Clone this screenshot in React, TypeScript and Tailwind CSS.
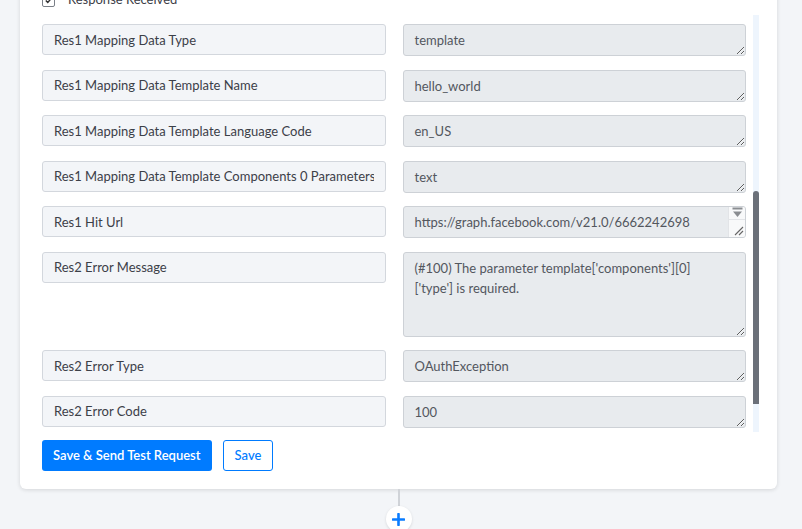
import React from "react";

type Row = { label: string; value: string; tall?: boolean; scroll?: boolean };

const rows: Row[] = [
  { label: "Res1 Mapping Data Type", value: "template" },
  { label: "Res1 Mapping Data Template Name", value: "hello_world" },
  { label: "Res1 Mapping Data Template Language Code", value: "en_US" },
  { label: "Res1 Mapping Data Template Components 0 Parameters 0 Type", value: "text" },
  {
    label: "Res1 Hit Url",
    value: "https://graph.facebook.com/v21.0/6662242698\n70041957/messages",
    scroll: true,
  },
  {
    label: "Res2 Error Message",
    value: "(#100) The parameter template['components'][0]\n['type'] is required.",
    tall: true,
  },
  { label: "Res2 Error Type", value: "OAuthException" },
  { label: "Res2 Error Code", value: "100" },
];

const font = { fontFamily: "Lato, 'Open Sans', sans-serif" };

function ValueBox({ r }: { r: Row }) {
  const ta = (
    <textarea
      readOnly
      value={r.value}
      className={`block w-full rounded-[3px] border border-[#cdd1d6] bg-[#e8ebee] pl-[11px] py-[5px] text-[13px] leading-[20px] text-[#53575e] outline-none overflow-hidden ${
        r.tall ? "h-[85px]" : "h-[32px]"
      } ${r.scroll ? "pr-[20px]" : "pr-[11px]"}`}
      style={font}
    />
  );
  if (!r.scroll) return ta;
  return (
    <div className="relative">
      {ta}
      <div className="absolute right-[1px] top-[1px] bottom-[1px] w-[17px] rounded-r-[2px] bg-[#f8f9fa] border-l border-[#e2e4e7] flex flex-col">
        <div className="h-[13px] border-b border-[#e2e4e7] flex justify-center">
          <svg width="13" height="12" viewBox="0 0 13 12">
            <rect x="1.5" y="0.5" width="10" height="2" fill="#8a8d91" />
            <path d="M2 4.5 H11 L6.5 10 Z" fill="#8a8d91" />
          </svg>
        </div>
        <div className="flex-1 flex items-end justify-end pr-[1px] pb-[1px]">
          <svg width="10" height="10" viewBox="0 0 10 10">
            <path d="M1 9 L9 1 M5 9 L9 5" stroke="#666" strokeWidth="1.1" />
          </svg>
        </div>
      </div>
    </div>
  );
}

export default function App() {
  return (
    <div className="w-[802px] h-[529px] overflow-hidden bg-[#f3f5f8]" style={font}>
      <div className="ml-[20px] w-[757px] -mt-[30px] bg-white rounded-[6px] shadow-[0_1px_4px_rgba(0,0,0,0.13)] pt-[21px] pb-[18px] pl-[22px] pr-[18px]">
        <div className="flex items-center h-[18px] gap-[13px]">
          <div className="w-[13px] h-[13px] rounded-[2px] border border-[#7a7f87] bg-white flex items-center justify-center">
            <svg width="9" height="9" viewBox="0 0 10 10">
              <path d="M2 5 L4.2 7.2 L8 2.8" fill="none" stroke="#333" strokeWidth="1.6" />
            </svg>
          </div>
          <span className="text-[13px] text-[#3c4048]">Response Received</span>
        </div>

        <div className="mt-[6px] flex h-[417px] gap-[7px]">
          <div className="flex-1 overflow-hidden pt-[9px]">
            <div className="grid grid-cols-2 gap-x-[17px] gap-y-[13.5px]">
              {rows.map((r) => (
                <React.Fragment key={r.label}>
                  <div className="self-start">
                    <input
                      readOnly
                      value={r.label}
                      className="w-full h-[31px] rounded-[3px] border border-[#d3d7dd] bg-[#f3f5f8] px-[11px] text-[13px] text-[#3c4048] outline-none"
                      style={font}
                    />
                  </div>
                  <ValueBox r={r} />
                </React.Fragment>
              ))}
            </div>
          </div>
          <div className="w-[6px] bg-[#eef5fd]">
            <div className="mt-[176px] h-[213px] rounded-t-[3px] bg-[#6b7079]" />
          </div>
        </div>

        <div className="mt-[8px] flex gap-[11px]">
          <button className="h-[31px] px-[11px] rounded-[3px] bg-[#007bff] text-white text-[13px] font-semibold" style={font}>
            Save &amp; Send Test Request
          </button>
          <button className="h-[31px] px-[11px] rounded-[3px] border border-[#007bff] bg-white text-[#007bff] text-[13px] font-medium" style={font}>
            Save
          </button>
        </div>
      </div>

      <div className="flex flex-col items-center w-[757px] ml-[20px]">
        <div className="w-[2px] h-[17px] bg-[#d0d3d8]" />
        <div className="w-[26px] h-[26px] rounded-full bg-white shadow-[0_1px_3px_rgba(0,0,0,0.12)] flex items-center justify-center">
          <svg width="13" height="13" viewBox="0 0 13 13">
            <path d="M6.5 1 V12 M1 6.5 H12" stroke="#0a7cff" strokeWidth="2.6" strokeLinecap="round" />
          </svg>
        </div>
      </div>
    </div>
  );
}
